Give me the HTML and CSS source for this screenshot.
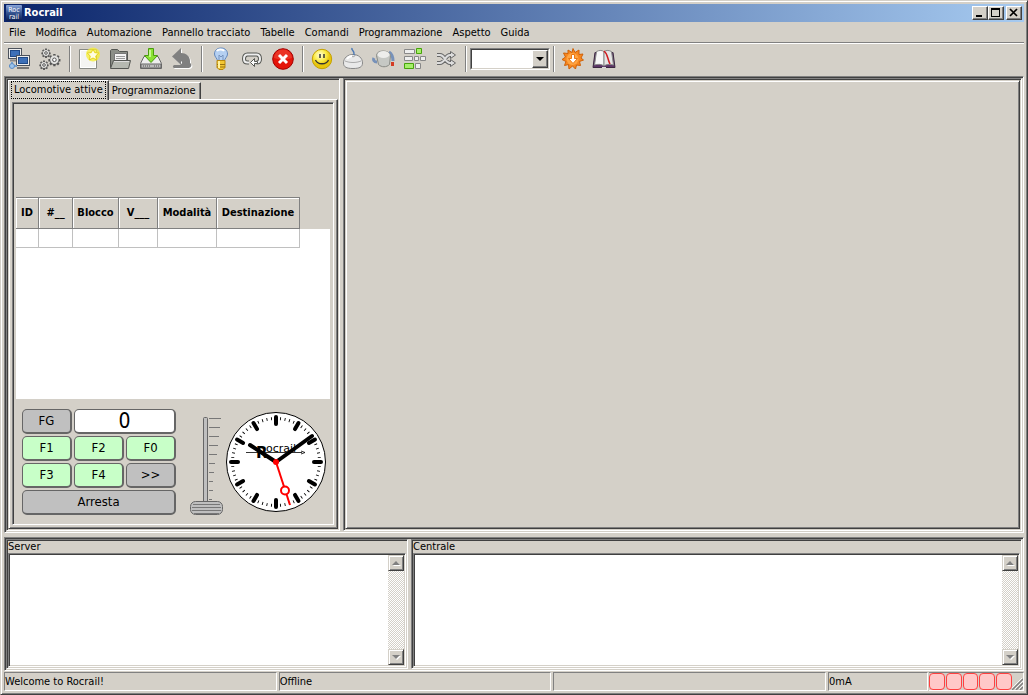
FILE: index.html
```html
<!DOCTYPE html>
<html lang="it">
<head>
<meta charset="utf-8">
<title>Rocrail</title>
<link rel="stylesheet" href="styles.css">
</head>
<body>
<div class="window">
  <header class="titlebar">
    <svg class="app-icon" width="16" height="16" viewBox="0 0 16 16">
      <defs><linearGradient id="app" x1="0" y1="0" x2="0" y2="1"><stop offset="0" stop-color="#8aa5d8"/><stop offset=".5" stop-color="#33528f"/><stop offset="1" stop-color="#0c1f52"/></linearGradient></defs>
      <rect width="16" height="16" rx="1" fill="url(#app)"/>
      <text x="8" y="7" text-anchor="middle" class="app-text">Roc</text>
      <text x="8" y="14" text-anchor="middle" class="app-text">rail</text>
    </svg>
    <h1 class="title">Rocrail</h1>
    <div class="caption-buttons">
      <button class="caption" aria-label="Riduci a icona"><svg width="12" height="10"><path d="M2 7h6v2H2z"/></svg></button>
      <button class="caption" aria-label="Ingrandisci"><svg width="12" height="10"><path d="M1 0h9v9H1zM2 2v6h7V2z" fill-rule="evenodd"/></svg></button>
      <button class="caption close" aria-label="Chiudi"><svg width="12" height="10"><path d="M2 1l7 7M9 1L2 8" stroke="#000" stroke-width="1.7"/></svg></button>
    </div>
  </header>

  <nav class="menubar">
    <button>File</button><button>Modifica</button><button>Automazione</button><button>Pannello tracciato</button><button>Tabelle</button><button>Comandi</button><button>Programmazione</button><button>Aspetto</button><button>Guida</button>
  </nav>

  <div class="toolbar">
    <button class="tool" aria-label="Connetti"><svg width="24" height="24" viewBox="0 0 24 24">
      <g stroke="#4d535c"><rect x="1.500" y="1.500" width="13" height="10" fill="#eee"/><rect x="3.500" y="3.500" width="9" height="6" fill="#3d70b8" stroke="#204a87"/><path d="M3 13.500h6" stroke="#888" stroke-width="2"/></g>
      <g stroke="#4d535c"><rect x="9.500" y="8.500" width="13" height="10" fill="#eee"/><rect x="11.500" y="10.500" width="9" height="6" fill="#3d70b8" stroke="#204a87"/><path d="M10 21h12" stroke="#777" stroke-width="2"/></g>
      <path d="M2 19h8M5 15v4" stroke="#729fcf" stroke-width="2"/><circle cx="5" cy="19" r="2.500" fill="#9cc4ec" stroke="#5b8cc4"/></svg></button>
    <button class="tool" aria-label="Proprietà"><svg width="24" height="24" viewBox="0 0 24 24" fill="none">
      <g fill="#555"><path id="cog" d="M-1.200-5.200h2.400v1.600l1.300.5 1.100-1.100 1.700 1.700-1.100 1.100.5 1.300h1.500v2.400H4.700l-.5 1.300 1.100 1.100-1.700 1.700-1.100-1.100-1.300.5v1.500h-2.400V5.800l-1.300-.5-1.100 1.100-1.700-1.700 1.100-1.100-.5-1.300h-1.500V-.1h1.500l.5-1.300-1.100-1.100 1.700-1.700 1.100 1.100 1.300-.5z" transform="translate(8 5.500) scale(.75)"/>
        <use href="#cog" x="-2" y="12"/><use href="#cog" transform="translate(6 5) scale(1.300)"/></g>
      <g fill="#e4e4e2"><circle cx="8" cy="6" r="3"/><circle cx="6" cy="18" r="3"/><circle cx="16.400" cy="12.800" r="4.200"/></g>
      <g fill="#fff" stroke="#555"><circle cx="8" cy="6" r="1.300"/><circle cx="6" cy="18" r="1.300"/><circle cx="16.400" cy="12.800" r="1.800"/></g></svg></button>
    <span class="sep"></span>
    <button class="tool" aria-label="Nuovo"><svg width="24" height="24" viewBox="0 0 24 24">
      <path d="M2.500 2.500h17v19h-17z" fill="#f4f4f2" stroke="#888a85"/><path d="M3.500 3.500h15v17h-15z" fill="none" stroke="#fff"/><circle cx="16" cy="7.500" r="7" fill="#f5ed32" opacity=".75"/>
      <path d="M16 2l1.700 3.600 4 .5-2.900 2.800.7 4L16 11l-3.500 1.900.7-4-2.900-2.800 4-.5z" fill="#fffde0" stroke="#e5d312"/></svg></button>
    <button class="tool" aria-label="Apri"><svg width="24" height="24" viewBox="0 0 24 24" stroke="#555753">
      <path d="M2.500 20.500v-17l1-1h6l2 2h8v15z" fill="#8b8e87"/><path d="M6.500 6.500h12v9h-12z" fill="#f4f4f4" stroke="#777"/><path d="M8 9.500h9M8 11.500h9" stroke="#999"/><path d="M2.500 21.500l3-8h17l-2 8z" fill="#b6b9b1"/><path d="M6 14.500h15" stroke="#ddd"/></svg></button>
    <button class="tool" aria-label="Salva"><svg width="24" height="24" viewBox="0 0 24 24">
      <path d="M5 9.500h14l3.500 7v5h-21v-5z" fill="#eee" stroke="#666"/><path d="M2 17h20v4H2z" fill="#bbb" stroke="#666"/><path d="M4 19h8M15 19h5" stroke="#555" stroke-dasharray="1 1"/>
      <path d="M9.500 1.500h5v7h4L12 15.500 5.500 8.500h4z" fill="#8ae234" stroke="#4b9c10"/><path d="M11 3v7" stroke="#d7ffac" stroke-width="1.500"/></svg></button>
    <button class="tool" aria-label="Annulla"><svg width="24" height="24" viewBox="0 0 24 24">
      <path id="undo" d="M11 1v5c5 0 9 3 9 8v2c2 1 2 4-1 5H4c-2-1-1-3 1-3h5c2-1 3-3 1-4v4L2 9.500z" fill="#fff" transform="translate(1 1)"/><path d="M11 1v5c5 0 9 3 9 8v2c2 1 2 4-1 5H4c-2-1-1-3 1-3h5c2-1 3-3 1-4v4L2 9.500z" fill="#808080"/></svg></button>
    <span class="sep"></span>
    <button class="tool" aria-label="Alimentazione"><svg width="24" height="24" viewBox="0 0 24 24">
      <path d="M12 1C8 1 5.500 3.500 5.500 7c0 3 3 4.500 3 7h7c0-2.500 3-4 3-7 0-3.500-2.500-6-6.500-6z" fill="#b5d0f2" stroke="#6287bb"/><path d="M8 4c1-2 6-2 7 0" stroke="#fff" stroke-width="2" fill="none"/><path d="M10 13V8l2 2 2-2v5" fill="none" stroke="#7693bd"/><path d="M8 13.500h8v7l-2 2h-4l-2-2z" fill="#f3c735" stroke="#b88810"/><path d="M8 17.500h8M8 20h8" stroke="#9b7410"/><path d="M10 14v7" stroke="#fff2a0" stroke-width="2"/></svg></button>
    <button class="tool" aria-label="Automatico"><svg width="24" height="24" viewBox="0 0 24 24" fill="none">
      <path d="M9 15.500H7.500c-3 0-3.500-1.500-3.500-3.500 0-2.500 1-4.500 3.500-4.500h9c3 0 3.500 2 3.500 4.500 0 2-1 3.500-3.500 3.500" stroke="#555753" stroke-width="4"/><path d="M9 15.500H7.500c-3 0-3.500-1.500-3.500-3.500 0-2.500 1-4.500 3.500-4.500h9c3 0 3.500 2 3.500 4.500 0 2-1 3.500-3.500 3.500" stroke="#eee" stroke-width="2"/><path d="M14.500 11.500v3h3v2h-3v3l-4-4z" fill="#fff" stroke="#555753"/></svg></button>
    <button class="tool" aria-label="Arresto di emergenza"><svg width="24" height="24" viewBox="0 0 24 24">
      <circle cx="12" cy="12" r="10.300" fill="#e41409" stroke="#a40000"/><path d="M3 11a9 8.500 0 0 1 18 0c-6 2-12 2-18 0z" fill="#f04a3a" opacity=".6"/><path d="M8 8l8 8M16 8l-8 8" stroke="#fff" stroke-width="3"/></svg></button>
    <span class="sep"></span>
    <button class="tool" aria-label="Operatore"><svg width="24" height="24" viewBox="0 0 24 24">
      <defs><radialGradient id="face" cx=".4" cy=".3"><stop offset="0" stop-color="#fffde0"/><stop offset=".6" stop-color="#fcee4d"/><stop offset="1" stop-color="#e8c50c"/></radialGradient></defs>
      <circle cx="12" cy="12" r="9.700" fill="url(#face)" stroke="#c4a000"/><path d="M10 7v4M14 7v4" stroke="#333" stroke-width="1.500"/><path d="M5.500 13c2 5 11 5 13 0" fill="none" stroke="#333" stroke-width="1.300"/></svg></button>
    <button class="tool" aria-label="Comando loco"><svg width="24" height="24" viewBox="0 0 24 24">
      <path d="M2.500 16c0-5 4-8.500 9.500-8.500s9.500 3.500 9.500 8.500c0 4-3 5.500-9.500 5.500S2.500 20 2.500 16z" fill="#e9e9e9" stroke="#888"/><path d="M4 14c5 2 11 2 16 0M10 7.500c-1 3 5 3 4 0" fill="none" stroke="#aaa"/><path d="M6 12c2-3 4-3 5-3" fill="none" stroke="#fff" stroke-width="2"/><path d="M11 1c-1 3 3 2 2 7" fill="none" stroke="#4a78b5" stroke-width="1.500"/></svg></button>
    <button class="tool" aria-label="Regolatore"><svg width="24" height="24" viewBox="0 0 24 24">
      <path d="M5 15c-3 0-4-2-3-4M17 5c3 2 4 5 4 9" fill="none" stroke="#7791b9" stroke-width="3"/><path d="M19 15h3v4h-3z" fill="#d43b24"/><path d="M4.500 8.500c0-6 13-6 14 0l-1 9c-3 3-8 3-11 0z" fill="#c6c8c4" stroke="#888a85"/><ellipse cx="11.500" cy="7.500" rx="6" ry="3.500" fill="#ededeb"/></svg></button>
    <button class="tool" aria-label="Itinerari"><svg width="24" height="24" viewBox="0 0 24 24" fill="#eee" stroke="#888">
      <path d="M1.500 2.500h10v4h-10zM1.500 9.500h8v4h-8zM11.500 9.500h4v4h-4zM17.500 9.500h5v4h-5zM12.500 16.500h5v5h-5z"/><path d="M13.500 1.500h5v5h-5zM1.500 16.500h9v5h-9z" fill="#a6ef6a" stroke="#47a30b"/></svg></button>
    <button class="tool" aria-label="Scambi"><svg width="24" height="24" viewBox="0 0 24 24" fill="none" stroke-linejoin="round">
      <g stroke="#666" stroke-width="4"><path d="M3 8h3c5 0 5 8 10 8h3M3 16h3c5 0 5-8 10-8h3"/></g><path d="M16.500 4.500l5 3.500-5 3.500zM16.500 12.500l5 3.500-5 3.500z" fill="#ddd" stroke="#666"/><path d="M3 8h3c5 0 5 8 10 8h3M3 16h3c5 0 5-8 10-8h3" stroke="#ddd" stroke-width="2"/></svg></button>
    <span class="sep"></span>
    <div class="combo"><select aria-label="Livello"><option></option></select><span class="combo-arrow"></span></div>
    <span class="sep"></span>
    <button class="tool" aria-label="Aggiorna"><svg width="24" height="24" viewBox="0 0 24 24">
      <path d="M12 1.500l2 4 4-2.500v4.500l4-.5-2 4 2.500 2-4 1.500 1 4-4-.5-1 4-3-3-3.500 3-.5-4.500-4 1 1.500-4-4-2 3.500-2.500-2-4 4.500.5V3l4 2.500z" fill="#f7871f" stroke="#cf6108"/><circle cx="11.500" cy="12" r="6" fill="#ffa544"/><path d="M10.500 7.500h3v4h3L12 16.500 7.500 11.500h3z" fill="#fff" stroke="#ea7814"/></svg></button>
    <button class="tool" aria-label="Manuale"><svg width="24" height="24" viewBox="0 0 24 24">
      <path d="M3 5.500h18l2 15H1z" fill="#5c3566" stroke="#3b2841"/><path d="M4.500 4.500c3-1.500 6-1.500 7.500.5v14c-2-2-7-2-9.500-1z" fill="#f7f7f7" stroke="#888"/><path d="M19.500 4.500c-3-1.500-6-1.500-7.500.5v14c2-2 7-2 9.500-1z" fill="#e6e6e6" stroke="#888"/><path d="M12 4c4 3 3 7 6 13" fill="none" stroke="#d01b20" stroke-width="1.500"/><path d="M10 20.500h4" stroke="#ddd"/></svg></button>
  </div>

  <main class="workspace">
    <div class="frame upper">
      <section class="pane loco-pane">
        <div class="tabs" role="tablist">
          <button class="tab selected" role="tab" aria-selected="true"><span>Locomotive attive</span></button>
          <button class="tab" role="tab" aria-selected="false">Programmazione</button>
        </div>
        <div class="page">
          <div class="page-inner">
            <div class="loco-image"></div>
            <div class="grid-area">
              <table class="locos">
                <colgroup><col class="c-id"><col class="c-num"><col class="c-block"><col class="c-v"><col class="c-mode"><col class="c-dest"></colgroup>
                <thead><tr><th>ID</th><th>#__</th><th>Blocco</th><th>V___</th><th>Modalità</th><th>Destinazione</th></tr></thead>
                <tbody><tr><td></td><td></td><td></td><td></td><td></td><td></td></tr></tbody>
              </table>
            </div>
            <div class="controls">
              <div class="keypad">
                <button class="key">FG</button><output class="key speed">0</output>
                <button class="key on">F1</button><button class="key on">F2</button><button class="key on">F0</button>
                <button class="key on">F3</button><button class="key on">F4</button><button class="key">&gt;&gt;</button>
                <button class="key stop">Arresta</button>
              </div>
              <svg class="slider" width="34" height="100" viewBox="0 0 34 100" role="img" aria-label="Velocità">
                <rect x="13.500" y="1.500" width="4" height="88" rx="1" fill="#bfbfbf" stroke="#666"/>
                <path d="M19 2.500h12M19 11.500h11M19 20.500h10M19 29.500h9M19 38.500h8M19 47.500h6M19 56.500h5M19 65.500h4M19 74.500h4M19 83.500h3" stroke="#777"/>
                <rect x=".5" y="85.500" width="32" height="13" rx="5" fill="#bfbfbf" stroke="#666"/>
                <path d="M3 88.500h27M2 91.500h29M2 94.500h29M4 97.500h25" stroke="#777"/>
              </svg>
              <svg class="clock" width="102" height="102" viewBox="-51 -51 102 102" role="img" aria-label="Orologio">
                <circle r="49.500" fill="#fff" stroke="#000"/>
                <circle r="43.500" fill="none" stroke="#000" stroke-width="3" pathLength="600" stroke-dasharray="2 8" stroke-dashoffset="1"/>
                <g stroke="#000" stroke-width="4" stroke-linecap="round">
                  <path id="tick" d="M0-38v-7"/><use href="#tick" transform="rotate(30)"/><use href="#tick" transform="rotate(60)"/><use href="#tick" transform="rotate(90)"/><use href="#tick" transform="rotate(120)"/><use href="#tick" transform="rotate(150)"/><use href="#tick" transform="rotate(180)"/><use href="#tick" transform="rotate(210)"/><use href="#tick" transform="rotate(240)"/><use href="#tick" transform="rotate(270)"/><use href="#tick" transform="rotate(300)"/><use href="#tick" transform="rotate(330)"/>
                </g>
                <text x="-20" y="-4" class="brand-r">R</text><text x="-10" y="-10" class="brand">ocrail</text>
                <path d="M-30-9.500h56M25-11l4 1.500-4 1.500" fill="none" stroke="#000" stroke-width=".8"/>
                <path d="M0 0l-26-17M0 0l36-26" stroke="#000" stroke-width="4" stroke-linecap="round"/>
                <path d="M0 0l14 43" stroke="red" stroke-width="2"/><circle cx="9" cy="28.500" r="4" fill="#fff" stroke="red" stroke-width="2"/><circle r="3" fill="red"/>
              </svg>
            </div>
          </div>
        </div>
      </section>
      <section class="pane plan-pane"><div class="plan"></div></section>
    </div>

    <div class="frame lower">
      <section class="pane server-pane">
        <label for="server">Server</label>
        <div class="log"><textarea id="server" readonly></textarea><div class="scroll"><button class="up" aria-label="Su"></button><button class="down" aria-label="Giù"></button></div></div>
      </section>
      <section class="pane station-pane">
        <label for="station">Centrale</label>
        <div class="log"><textarea id="station" readonly></textarea><div class="scroll"><button class="up" aria-label="Su"></button><button class="down" aria-label="Giù"></button></div></div>
      </section>
    </div>
  </main>

  <footer class="status">
    <span class="field">Welcome to Rocrail!</span><span class="field">Offline</span><span class="field"></span><span class="field current">0mA</span>
    <span class="field leds"><i></i><i></i><i></i><i></i><i></i>
      <svg class="grip" width="11" height="14" viewBox="0 0 11 14"><path d="M0 14L11 3M4 14l7-7M8 14l3-3" stroke="#808080" stroke-width="1.500"/><path d="M-1 13L10 2M3 13l8-8M7 13l4-4" stroke="#fff" stroke-width=".8"/></svg></span>
  </footer>
</div>
</body>
</html>
```
FILE: styles.css
```css
* { box-sizing: border-box; }

body {
  margin: 0;
  background: #d4d0c8;
  color: #000;
  font: 11px/14px "DejaVu Sans Condensed", "DejaVu Sans", sans-serif;
}

button, select, textarea { font: inherit; color: inherit; margin: 0; padding: 0; border: 0; border-radius: 0; background: none; }
svg { display: block; flex: none; }

.window {
  display: flex;
  flex-direction: column;
  height: 100vh;
  padding: 3px;
  border: 1px solid;
  border-color: #d4d0c8 #404040 #404040 #d4d0c8;
  background: #d4d0c8;
  box-shadow: inset 1px 1px #fff, inset -1px -1px #808080;
}

/* Title bar */
.titlebar { display: flex; align-items: center; gap: 2px; height: 18px; flex: none; padding: 0 2px; background: linear-gradient(90deg, #0a246a, #a6caf0); }
.app-text { font: 7px "DejaVu Sans Condensed", sans-serif; fill: #fff; }
.title { margin: 0; flex: 1; color: #fff; font-size: 11px; font-weight: bold; }
.caption-buttons { display: flex; }
.caption { width: 16px; height: 14px; padding: 1px; background: #d4d0c8; border: 1px solid; border-color: #fff #404040 #404040 #fff; box-shadow: inset -1px -1px #808080; }
.caption.close { margin-left: 2px; }

/* Menu */
.menubar { display: flex; gap: 10px; height: 22px; flex: none; padding: 0 5px; border-bottom: 1px solid #fff; box-shadow: inset 0 -1px #808080; }
.menubar button { height: 20px; padding-top: 2px; white-space: nowrap; }

/* Toolbar */
.toolbar { display: flex; align-items: center; height: 32px; flex: none; padding-bottom: 2px; }
.tool { display: flex; align-items: center; justify-content: center; width: 31px; height: 30px; padding-right: 2px; }
.sep { width: 2px; height: 26px; margin: 0 3px; border-left: 1px solid #808080; border-right: 1px solid #fff; }
.combo { position: relative; width: 80px; height: 22px; border: 1px solid; border-color: #808080 #fff #fff #808080; }
.combo select { display: block; width: 100%; height: 100%; appearance: none; background: #fff; border: 1px solid; border-color: #404040 #d4d0c8 #d4d0c8 #404040; }
.combo-arrow { position: absolute; top: 1px; right: 1px; bottom: 1px; width: 16px; pointer-events: none; background: #d4d0c8; border: 1px solid; border-color: #fff #404040 #404040 #fff; box-shadow: inset -1px -1px #808080; }
.combo-arrow::after { content: ""; position: absolute; left: 3px; top: 6px; border: 4px solid transparent; border-top-color: #000; border-bottom: 0; }

/* Split panes */
.workspace { display: flex; flex-direction: column; gap: 4px; flex: 1; min-height: 0; }
.frame, .pane { border: 1px solid; border-color: #808080 #fff #fff #808080; box-shadow: inset 1px 1px #404040; padding: 1px; }
.frame { display: flex; gap: 3px; }
.upper { flex: 1; min-height: 0; }
.lower { height: 134px; flex: none; }
.pane { display: flex; flex-direction: column; min-width: 0; }
.loco-pane { width: 334px; flex: none; }
.plan-pane, .station-pane { flex: 1; }
.server-pane { width: 402px; flex: none; }
.plan { flex: 1; border: 1px solid; border-color: #d4d0c8 #404040 #404040 #d4d0c8; box-shadow: inset 1px 1px #fff, inset -1px -1px #808080; }

/* Notebook */
.tabs { display: flex; align-items: flex-end; height: 19px; flex: none; }
.tab { height: 17px; padding: 0 4px 0 3px; white-space: nowrap; border-top: 1px solid #fff; border-right: 1px solid #404040; box-shadow: inset -1px 0 #808080; }
.tab.selected { height: 20px; padding: 0 2px 1px; background: #d4d0c8; border-left: 1px solid #fff; z-index: 1; margin-bottom: -1px; }
.tab.selected span { display: block; height: 18px; padding: 0 2px; line-height: 16px; border: 1px dotted #000; }
.page { display: flex; flex: 1; min-height: 0; padding: 2px 3px 3px; border: 1px solid; border-color: #fff #404040 #404040 #d4d0c8; box-shadow: inset 1px 0 #fff, inset -1px -1px #808080; }
.page-inner { display: flex; flex-direction: column; flex: 1; padding: 1px 3px; border: 1px solid; border-color: #808080 #fff #fff #808080; box-shadow: inset 1px 1px #404040; }
.loco-image { height: 93px; flex: none; }
.grid-area { flex: 1; min-height: 0; background: linear-gradient(#d4d0c8 32px, #fff 32px); }
.locos { table-layout: fixed; width: 284px; border-collapse: separate; border-spacing: 0; }
.c-id { width: 23px; }
.c-num { width: 34px; }
.c-block { width: 46px; }
.c-v { width: 39px; }
.c-mode { width: 59px; }
.c-dest { width: 83px; }
.locos th { height: 32px; padding: 0; white-space: nowrap; border: solid #808080; border-width: 1px 1px 1px 0; box-shadow: inset 1px 1px #fff; }
.locos td { height: 19px; padding: 0; border: solid #c0c0c0; border-width: 0 1px 1px 0; }

/* Throttle */
.controls { display: flex; height: 124px; flex: none; padding: 10px 0 0 6px; }
.keypad { display: grid; grid-template-columns: repeat(3, 50px); grid-auto-rows: 25px; gap: 2px; align-content: start; }
.key { display: flex; align-items: center; justify-content: center; font-size: 13px; line-height: 16px; background: #c0c0c0; border: solid #666; border-width: 1px 2px 2px 1px; border-radius: 5px; }
.key.on { background: #c8ffc8; }
.speed { grid-column: span 2; font-size: 21px; background: #fff; }
.stop { grid-column: span 3; }
.slider { margin: 7px 0 0 14px; }
.clock { margin: 2px 0 0 1px; }
.brand { font: 11px "DejaVu Sans", sans-serif; }
.brand-r { font: bold 15px "DejaVu Sans", sans-serif; }

/* Logs */
.pane label { height: 12px; flex: none; line-height: 12px; }
.log { display: flex; flex: 1; min-height: 0; padding: 1px; border: 1px solid; border-color: #808080 #fff #fff #808080; box-shadow: inset 1px 1px #404040; }
.log textarea { flex: 1; min-width: 0; resize: none; outline: 0; background: #fff; }
.scroll { display: flex; flex-direction: column; justify-content: space-between; width: 16px; background: repeating-conic-gradient(#fff 0 25%, #d4d0c8 0 50%) 0 0 / 2px 2px; }
.scroll button { display: flex; align-items: center; justify-content: center; height: 16px; background: #d4d0c8; border: 1px solid; border-color: #d4d0c8 #404040 #404040 #d4d0c8; box-shadow: inset 1px 1px #fff, inset -1px -1px #808080; }
.scroll button::after { content: ""; border: 4px solid transparent; }
.scroll .up::after { border-top: 0; border-bottom-color: #808080; filter: drop-shadow(1px 1px #fff); }
.scroll .down::after { border-bottom: 0; border-top-color: #808080; filter: drop-shadow(1px 1px #fff); }

/* Status bar */
.status { display: flex; gap: 2px; flex: none; height: 20px; padding-top: 1px; }
.field { flex: 1; padding: 1px 0; white-space: nowrap; line-height: 16px; border: 1px solid; border-color: #808080 #fff #fff #808080; }
.current { flex: none; width: 100px; }
.leds { display: flex; flex: none; width: 95px; gap: 1px; padding: 0; border-left: 0; margin-left: -1px; }
.leds i { width: 16px; height: 17px; background: #ffc8c8; border: 1px solid #ff4040; border-radius: 4px; }
.grip { align-self: flex-end; margin-left: -1px; }
```
